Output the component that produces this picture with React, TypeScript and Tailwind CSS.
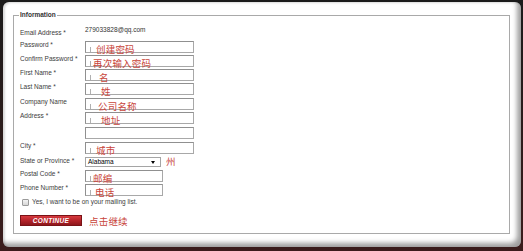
import React from "react";

type Row = {
  label: string;
  mt: string;
  w: string;
  cn?: string;
  cnLeft?: string;
  caret?: boolean;
};

const rows: Row[] = [
  { label: "Password *", mt: "mt-[4px]", w: "w-[109px]", cn: "创建密码", cnLeft: "left-[10px]", caret: true },
  { label: "Confirm Password *", mt: "mt-[2px]", w: "w-[109px]", cn: "再次输入密码", cnLeft: "left-[7px]", caret: true },
  { label: "First Name *", mt: "mt-[2px]", w: "w-[109px]", cn: "名", cnLeft: "left-[13px]", caret: true },
  { label: "Last Name *", mt: "mt-[2px]", w: "w-[109px]", cn: "姓", cnLeft: "left-[15px]", caret: true },
  { label: "Company Name", mt: "mt-[3px]", w: "w-[109px]", cn: "公司名称", cnLeft: "left-[12px]", caret: true },
  { label: "Address *", mt: "mt-[2px]", w: "w-[109px]", cn: "地址", cnLeft: "left-[15px]", caret: true },
  { label: "", mt: "mt-[3px]", w: "w-[109px]" },
  { label: "City *", mt: "mt-[3px]", w: "w-[109px]", cn: "城市", cnLeft: "left-[10px]", caret: true },
];

const rows2: Row[] = [
  { label: "Postal Code *", mt: "mt-[3px]", w: "w-[78px]", cn: "邮编", cnLeft: "left-[7px]", caret: true },
  { label: "Phone Number *", mt: "mt-[2px]", w: "w-[78px]", cn: "电话", cnLeft: "left-[9px]", caret: true },
];

function Label({ text }: { text: string }) {
  return (
    <div className="w-[65px] shrink-0 text-[6.5px] leading-[8px] text-[#3c3c3c] whitespace-nowrap">
      {text}
    </div>
  );
}

function Input({ row }: { row: Row }) {
  return (
    <div className={`flex h-[12px] items-start ${row.mt}`}>
      <Label text={row.label} />
      <div className={`relative h-[12px] ${row.w} border border-[#a8a8a8] border-t-[#909090] border-l-[#909090] bg-white`}>
        {row.caret && <div className="absolute left-[4px] top-[5px] bottom-0 w-px bg-[#b0b0b0]" />}
        {row.cn && (
          <span
            className={`absolute ${row.cnLeft} top-[1px] whitespace-nowrap font-['Noto_Sans_CJK_SC',sans-serif] text-[9.5px] leading-[12px] tracking-[0.2px] text-[#c8443a]`}
          >
            {row.cn}
          </span>
        )}
      </div>
    </div>
  );
}

export default function App() {
  return (
    <div className="w-[523px] h-[251px] flex bg-gradient-to-b from-[#1b1b1b] to-[#3b1c1c] pt-[2px] pl-[3px] pr-[2px] pb-[4px] font-['Liberation_Sans',Arial,sans-serif]">
      <div className="flex-1 flex flex-col rounded-[6px] bg-white pl-[10px] pr-[11px] pt-[9px] pb-[13px] shadow-[inset_-5px_-5px_5px_-1px_rgba(0,0,0,0.38),inset_2px_1px_2px_rgba(0,0,0,0.15)]">
        <fieldset className="flex-1 min-h-0 border border-[#a9a9a9]">
          <legend className="ml-[5px] px-[1px] text-[6.5px] leading-[8px] font-bold text-[#333]">Information</legend>
          <div className="flex flex-col pl-[6px]">
            <div className="flex h-[8px] items-start mt-[10px]">
              <Label text="Email Address *" />
              <div className="text-[6.5px] leading-[8px] text-[#333] -mt-[3px]">279033828@qq.com</div>
            </div>
            {rows.map((r, i) => (
              <Input key={i} row={r} />
            ))}
            <div className="flex h-[10px] items-start mt-[3px]">
              <Label text="State or Province *" />
              <div className="relative flex h-[10px] w-[76px] items-center border border-[#a5a5a5] bg-white pl-[2px]">
                <span className="text-[6.5px] leading-[8px] text-black">Alabama</span>
                <svg className="absolute right-[5px] top-[3px]" width="4" height="3" viewBox="0 0 4 3">
                  <path d="M0 0 L4 0 L2 3 Z" fill="#000" />
                </svg>
              </div>
              <span className="ml-[5px] -mt-[1px] font-['Noto_Sans_CJK_SC',sans-serif] text-[9.5px] leading-[10px] text-[#c8443a]">州</span>
            </div>
            {rows2.map((r, i) => (
              <Input key={i} row={r} />
            ))}
            <div className="flex h-[8px] items-center mt-[2px] pl-[2px]">
              <div className="h-[7px] w-[7px] border border-[#9a9a9a] bg-gradient-to-b from-[#f4f4f4] to-[#d6d6d6] rounded-[1px]" />
              <span className="ml-[3px] text-[6.5px] leading-[8px] text-[#3c3c3c] whitespace-nowrap">
                Yes, I want to be on your mailing list.
              </span>
            </div>
            <div className="flex items-center mt-[9px]">
              <div className="flex h-[11px] w-[62px] items-center justify-center bg-gradient-to-b from-[#d73a3f] via-[#b5242a] to-[#8e171c] border border-[#7a1216]">
                <span className="text-[6.5px] leading-[8px] font-bold italic tracking-[0.3px] text-white">CONTINUE</span>
              </div>
              <span className="ml-[7px] font-['Noto_Sans_CJK_SC',sans-serif] text-[9.5px] leading-[10px] tracking-[0.2px] text-[#c8443a]">点击继续</span>
            </div>
          </div>
        </fieldset>
      </div>
    </div>
  );
}
